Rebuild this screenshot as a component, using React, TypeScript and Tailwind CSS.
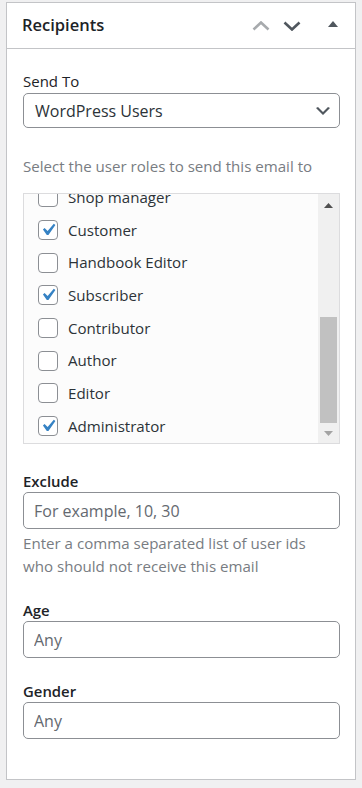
import React from 'react';

const roles = [
  { name: 'Shop manager', checked: false },
  { name: 'Customer', checked: true },
  { name: 'Handbook Editor', checked: false },
  { name: 'Subscriber', checked: true },
  { name: 'Contributor', checked: false },
  { name: 'Author', checked: false },
  { name: 'Editor', checked: false },
  { name: 'Administrator', checked: true },
];

const Checkbox = ({ checked }: { checked: boolean }) => (
  <span className="relative flex h-[20px] w-[20px] shrink-0 items-center justify-center rounded-[4px] border border-[#8c8f94] bg-white">
    {checked && (
      <svg viewBox="0 0 20 20" className="absolute left-[-3px] top-[-3px] h-[24px] w-[24px]">
        <path d="M14.83 4.89l1.34.94-5.81 8.38H9.02L5.78 9.67l1.34-1.25 2.57 2.4z" fill="#3582c4" />
      </svg>
    )}
  </span>
);

const Field = ({ label, placeholder }: { label: string; placeholder: string }) => (
  <>
    <label className="block h-[22px] text-[14.9px] font-semibold leading-[22px] text-[#1d2327]">{label}</label>
    <input
      placeholder={placeholder}
      className="block h-[37px] w-full rounded-[5px] border border-[#8c8f94] bg-white px-[10px] text-[16px] text-[#2c3338] placeholder:text-[#646970] focus:outline-none"
    />
  </>
);

export default function App() {
  return (
    <div className="min-h-screen bg-[#f0f0f1] px-[6px] pt-[2px]" style={{ fontFamily: '"Open Sans", "Noto Sans", sans-serif' }}>
      <div className="h-[778px] border border-[#c3c4c7] bg-white">
        {/* header */}
        <div className="flex h-[46px] items-center border-b border-[#c3c4c7] pl-[15px] pr-[15px]">
          <h2 className="flex-1 text-[16.5px] font-semibold text-[#1d2327]">Recipients</h2>
          <div className="flex items-center">
            <svg width="18" height="10" viewBox="0 0 18 10" className="mr-[13px]">
              <polyline points="1.5,8.5 9,1.5 16.5,8.5" fill="none" stroke="#a7aaad" strokeWidth="2.6" />
            </svg>
            <svg width="18" height="10" viewBox="0 0 18 10" className="mr-[27px]">
              <polyline points="1.5,1.5 9,8.5 16.5,1.5" fill="none" stroke="#50575e" strokeWidth="2.6" />
            </svg>
            <svg width="10" height="6" viewBox="0 0 10 6" className="mb-[3px] mr-[2px]">
              <polygon points="0,6 5,0 10,6" fill="#50575e" />
            </svg>
          </div>
        </div>

        {/* body */}
        <div className="flex flex-col pl-[16px] pr-[15px] pt-[21px]">
          <label className="block h-[22px] text-[15px] leading-[22px] text-[#1d2327]">Send To</label>
          <div className="relative mt-px flex h-[35px] items-center rounded-[5px] border border-[#8c8f94] bg-white pl-[11px]">
            <span className="text-[16px] text-[#2c3338]">WordPress Users</span>
            <svg viewBox="0 0 20 20" className="absolute right-[6px] top-[7px] h-[20px] w-[20px]">
              <path d="M5 6l5 5 5-5 2 1-7 7-7-7 2-1z" fill="#50575e" />
            </svg>
          </div>

          <p className="mt-[26px] whitespace-nowrap text-[15.1px] leading-[24px] text-[#787c82]">Select the user roles to send this email to</p>

          <div className="relative mt-[15px] flex h-[251px] border border-[#dcdcde] bg-[#fcfcfc]">
            <div className="flex flex-1 flex-col justify-end overflow-hidden pb-[0.5px] pl-[14px]">
              {roles.map((r) => (
                <div key={r.name} className="flex h-[32.7px] shrink-0 items-center gap-[10px]">
                  <Checkbox checked={r.checked} />
                  <span className="text-[15.1px] text-[#2c3338]">{r.name}</span>
                </div>
              ))}
            </div>
            {/* scrollbar */}
            <div className="flex w-[21px] flex-col items-center bg-[#f0f0f0]">
              <div className="flex h-[17px] w-full items-center justify-center">
                <svg width="9" height="5" viewBox="0 0 9 5" className="mt-[6px]">
                  <polygon points="0,5 4.5,0 9,5" fill="#505050" />
                </svg>
              </div>
              <div className="mt-[106px] h-[106px] w-[17px] bg-[#c1c1c1]" />
              <div className="flex flex-1 items-center justify-center">
                <svg width="9" height="5" viewBox="0 0 9 5">
                  <polygon points="0,0 9,0 4.5,5" fill="#a3a3a3" />
                </svg>
              </div>
            </div>
          </div>

          <div className="mt-[26px]">
            <Field label="Exclude" placeholder="For example, 10, 30" />
          </div>
          <p className="mt-[3px] text-[15.1px] leading-[23px] text-[#787c82]">
            Enter a comma separated list of user ids
            <br />
            who should not receive this email
          </p>

          <div className="mt-[21px]">
            <Field label="Age" placeholder="Any" />
          </div>
          <div className="mt-[22px]">
            <Field label="Gender" placeholder="Any" />
          </div>
        </div>
      </div>
    </div>
  );
}
